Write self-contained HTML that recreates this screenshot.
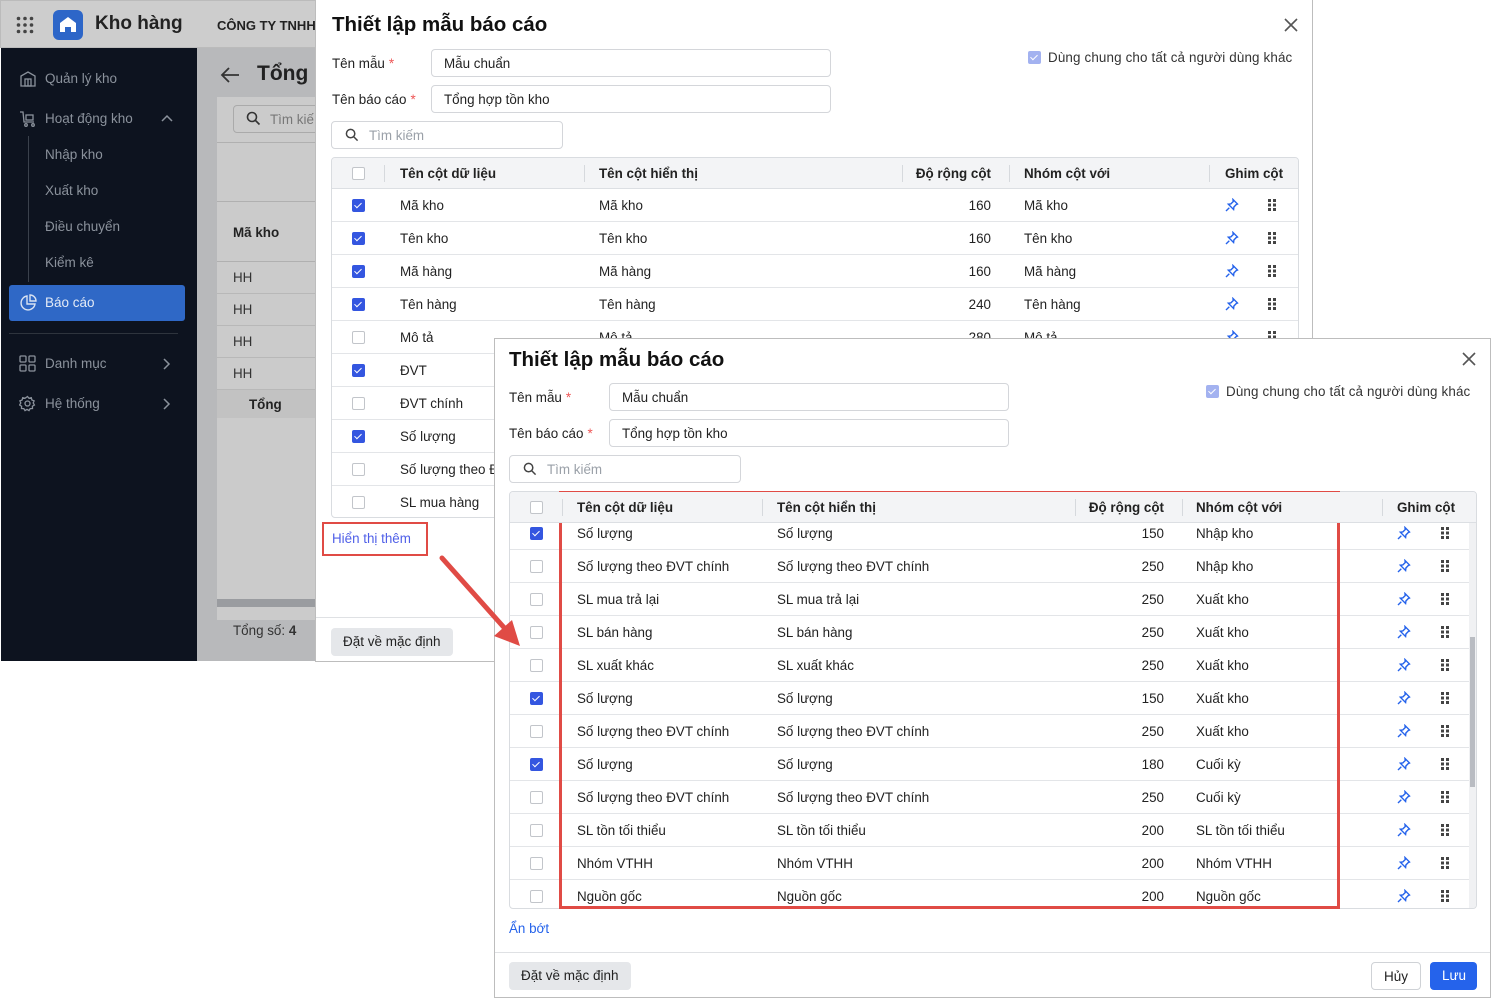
<!DOCTYPE html>
<html><head><meta charset="utf-8">
<style>
*{box-sizing:border-box;margin:0;padding:0}
body{width:1495px;height:1003px;background:#fff;font-family:"Liberation Sans",sans-serif;font-size:13.4px;color:#222;position:relative;overflow:hidden}
.a{position:absolute}
.hdr{left:0;top:0;width:1312px;height:48px;background:#cdcdcd;border:1px solid #bbb}
.side{left:1px;top:48px;width:196px;height:613px;background:#0d131f}
.main{left:197px;top:48px;width:1115px;height:613px;background:#b8b9bb}
.side .it{position:absolute;left:44px;color:#8b929c;font-size:13.5px}
.dlg{background:#fff;border:1px solid #bdbdbd}
.ttl{font-size:20.5px;font-weight:bold;color:#111}
.lbl{font-size:13.4px;color:#222}
.lbl i{color:#e55;font-style:normal;margin-left:4px}
.inp{border:1px solid #d4d6da;border-radius:4px;height:28px;padding:6px 12px;font-size:13.4px;color:#222;background:#fff}
.srch{color:#9aa0a8}
.tbl{border:1px solid #d9dce0;border-radius:4px;overflow:hidden;background:#fff}
.th{position:absolute;left:0;top:0;right:0;height:31px;background:#f3f4f6;border-bottom:1px solid #dcdfe3;font-weight:bold;font-size:13.4px;color:#222}
.th span,.tr span{position:absolute;top:8px;white-space:nowrap}
.tr{position:absolute;left:0;right:0;height:33px;border-bottom:1px solid #e3e5e8}
.tr span{top:9px}
.sep{position:absolute;top:7px;width:1px;height:17px;background:#d6d9dd}
.cb{position:absolute;width:13px;height:13px;border:1px solid #c2c5ca;border-radius:2px;background:#fff}
.cb.on{background:#3456e0;border-color:#3456e0}
.cb.on:after{content:"";position:absolute;left:3px;top:1px;width:3px;height:6px;border:solid #fff;border-width:0 1.5px 1.5px 0;transform:rotate(45deg)}
.btn{border-radius:4px;height:28px;padding:6px 12px;font-size:13.5px;color:#222;background:#e5e7ea}
</style></head><body>

<div class="a hdr"></div>
<div class="a" style="left:16px;top:16px">
<svg width="18" height="18" viewBox="0 0 18 18" fill="#444"><circle cx="2.5" cy="2.5" r="1.8"/><circle cx="9" cy="2.5" r="1.8"/><circle cx="15.5" cy="2.5" r="1.8"/><circle cx="2.5" cy="9" r="1.8"/><circle cx="9" cy="9" r="1.8"/><circle cx="15.5" cy="9" r="1.8"/><circle cx="2.5" cy="15.5" r="1.8"/><circle cx="9" cy="15.5" r="1.8"/><circle cx="15.5" cy="15.5" r="1.8"/></svg></div>
<div class="a" style="left:53px;top:10px;width:30px;height:30px;background:#2d66c8;border-radius:6px">
<svg width="30" height="30" viewBox="0 0 30 30"><path d="M7 22V13l8-6 8 6v9h-5v-5h-6v5z" fill="#fff"/><path d="M13 22v-4h4v4" fill="#2d66c8"/></svg></div>
<div class="a" style="left:95px;top:13px;font-size:19px;font-weight:bold;color:#222">Kho hàng</div>
<div class="a" style="left:217px;top:18px;font-size:13px;font-weight:bold;color:#222;width:98px;overflow:hidden;white-space:nowrap">CÔNG TY TNHH</div>
<div class="a side">
 <svg class="a" style="left:18px;top:22px" width="18" height="18" viewBox="0 0 18 18" fill="none" stroke="#8b929c" stroke-width="1.3"><path d="M2 16V6l7-4 7 4v10z"/><rect x="6" y="9" width="6" height="7"/><path d="M9 9v7"/></svg>
 <div class="it" style="top:23px">Quản lý kho</div>
 <svg class="a" style="left:18px;top:62px" width="18" height="18" viewBox="0 0 18 18" fill="none" stroke="#8b929c" stroke-width="1.3"><path d="M1 2h3l1 10h10"/><rect x="7" y="5" width="7" height="5"/><circle cx="7" cy="15" r="1.3"/><circle cx="14" cy="15" r="1.3"/></svg>
 <div class="it" style="top:63px">Hoạt động kho</div>
 <svg class="a" style="left:160px;top:66px" width="12" height="8" viewBox="0 0 12 8" fill="none" stroke="#8b929c" stroke-width="1.5"><path d="M1 7l5-5 5 5"/></svg>
 <div class="a" style="left:27px;top:88px;width:1px;height:146px;background:#3a414c"></div>
 <div class="it" style="top:99px">Nhập kho</div>
 <div class="it" style="top:135px">Xuất kho</div>
 <div class="it" style="top:171px">Điều chuyển</div>
 <div class="it" style="top:207px">Kiểm kê</div>
 <div class="a" style="left:8px;top:237px;width:176px;height:36px;background:#2f68c6;border-radius:3px"></div>
 <svg class="a" style="left:18px;top:246px" width="18" height="18" viewBox="0 0 18 18" fill="none" stroke="#d8e2f2" stroke-width="1.4"><path d="M8 2a7 7 0 1 0 8 8H8z"/><path d="M11 1v6h6a6 6 0 0 0-6-6z"/></svg>
 <div class="it" style="top:247px;color:#e4ebf6">Báo cáo</div>
 <div class="a" style="left:8px;top:285px;width:169px;height:1px;background:#2e343d"></div>
 <svg class="a" style="left:18px;top:307px" width="17" height="17" viewBox="0 0 17 17" fill="none" stroke="#8b929c" stroke-width="1.3"><rect x="1" y="1" width="6" height="6" rx="1"/><rect x="10" y="1" width="6" height="6" rx="1"/><rect x="1" y="10" width="6" height="6" rx="1"/><rect x="10" y="10" width="6" height="6" rx="1"/></svg>
 <div class="it" style="top:308px">Danh mục</div>
 <svg class="a" style="left:162px;top:310px" width="8" height="12" viewBox="0 0 8 12" fill="none" stroke="#8b929c" stroke-width="1.5"><path d="M1 1l5 5-5 5"/></svg>
 <svg class="a" style="left:18px;top:347px" width="17" height="17" viewBox="0 0 17 17" fill="none" stroke="#8b929c" stroke-width="1.3"><circle cx="8.5" cy="8.5" r="2.5"/><path d="M8.5 1.5l1.5 1.8 2.3-.6.6 2.3 2.2.9-.9 2.1 1.2 2-2 1.2.1 2.3-2.3.1-1.2 2-2-1.2-2 1.2-1.2-2-2.3-.1.1-2.3-2-1.2 1.2-2-.9-2.1 2.2-.9.6-2.3 2.3.6z"/></svg>
 <div class="it" style="top:348px">Hệ thống</div>
 <svg class="a" style="left:162px;top:350px" width="8" height="12" viewBox="0 0 8 12" fill="none" stroke="#8b929c" stroke-width="1.5"><path d="M1 1l5 5-5 5"/></svg>
</div>
<div class="a main"></div>
<svg class="a" style="left:220px;top:66px" width="20" height="18" viewBox="0 0 20 18" fill="none" stroke="#333" stroke-width="1.8"><path d="M19 9H2M9 2L2 9l7 7"/></svg>
<div class="a" style="left:257px;top:62px;font-size:21px;font-weight:bold;color:#222">Tổng h</div>
<div class="a" style="left:217px;top:97px;width:98px;height:523px;background:#cbcbcb"></div>
<div class="a" style="left:233px;top:105px;width:90px;height:28px;border:1px solid #aaa;border-radius:4px;background:#cbcbcb"></div>
<svg class="a" style="left:246px;top:111px" width="15" height="15" viewBox="0 0 15 15" fill="none" stroke="#333" stroke-width="1.6"><circle cx="6" cy="6" r="4.5"/><path d="M9.5 9.5l4 4"/></svg>
<div class="a" style="left:270px;top:112px;color:#777">Tìm kiế</div>
<div class="a" style="left:217px;top:142px;width:98px;height:1px;background:#b0b0b0"></div>
<div class="a" style="left:217px;top:201px;width:98px;height:61px;border-top:1px solid #b0b0b0;border-bottom:1px solid #b0b0b0"></div>
<div class="a" style="left:233px;top:225px;font-weight:bold;color:#222">Mã kho</div>
<div class="a" style="left:217px;top:293px;width:98px;height:1px;background:#b8b8b8"></div>
<div class="a" style="left:217px;top:325px;width:98px;height:1px;background:#b8b8b8"></div>
<div class="a" style="left:217px;top:357px;width:98px;height:1px;background:#b8b8b8"></div>
<div class="a" style="left:217px;top:389px;width:98px;height:29px;background:#c2c2c2;border-top:1px solid #b8b8b8"></div>
<div class="a" style="left:233px;top:270px;color:#333">HH</div>
<div class="a" style="left:233px;top:302px;color:#333">HH</div>
<div class="a" style="left:233px;top:334px;color:#333">HH</div>
<div class="a" style="left:233px;top:366px;color:#333">HH</div>
<div class="a" style="left:249px;top:397px;font-weight:bold;color:#222">Tổng</div>
<div class="a" style="left:217px;top:599px;width:98px;height:8px;background:#9a9ca0"></div>
<div class="a" style="left:233px;top:623px;color:#333">Tổng số: <b>4</b></div>

<div class="a dlg" style="left:315px;top:0;width:998px;height:662px;border-top:none">
 <div class="a ttl" style="left:16px;top:13px">Thiết lập mẫu báo cáo</div>
 <svg class="a" style="left:968px;top:18px" width="14" height="14" viewBox="0 0 14 14" stroke="#555" stroke-width="1.6"><path d="M1 1l12 12M13 1L1 13"/></svg>
 <div class="a cb on" style="left:712px;top:51px;opacity:.45"></div>
 <div class="a" style="left:732px;top:50px;color:#333;letter-spacing:.15px">Dùng chung cho tất cả người dùng khác</div>
 <div class="a lbl" style="left:16px;top:56px">Tên mẫu<i>*</i></div>
 <div class="a inp" style="left:115px;top:49px;width:400px">Mẫu chuẩn</div>
 <div class="a lbl" style="left:16px;top:92px">Tên báo cáo<i>*</i></div>
 <div class="a inp" style="left:115px;top:85px;width:400px">Tổng hợp tồn kho</div>
 <div class="a inp srch" style="left:15px;top:121px;width:232px;padding-left:37px">Tìm kiếm</div>
 <svg class="a" style="left:29px;top:128px" width="14" height="14" viewBox="0 0 15 15" fill="none" stroke="#444" stroke-width="1.6"><circle cx="6" cy="6" r="4.5"/><path d="M9.5 9.5l4 4"/></svg>
 <div class="a tbl" style="left:15px;top:157px;width:968px;height:361px" id="t1"></div>
 <div class="a" style="left:6px;top:522px;width:106px;height:34px;border:2px solid #e04b45"></div>
 <div class="a" style="left:16px;top:531px;color:#4f5fe8">Hiển thị thêm</div>
 <div class="a" style="left:0;top:617px;width:996px;height:1px;background:#dfe1e4"></div>
 <div class="a btn" style="left:15px;top:628px">Đặt về mặc định</div>
</div>

<div class="a dlg" style="left:494px;top:338px;width:997px;height:660px">
 <div class="a ttl" style="left:14px;top:9px">Thiết lập mẫu báo cáo</div>
 <svg class="a" style="left:967px;top:13px" width="14" height="14" viewBox="0 0 14 14" stroke="#555" stroke-width="1.6"><path d="M1 1l12 12M13 1L1 13"/></svg>
 <div class="a cb on" style="left:711px;top:46px;opacity:.45"></div>
 <div class="a" style="left:731px;top:45px;color:#333;letter-spacing:.15px">Dùng chung cho tất cả người dùng khác</div>
 <div class="a lbl" style="left:14px;top:51px">Tên mẫu<i>*</i></div>
 <div class="a inp" style="left:114px;top:44px;width:400px">Mẫu chuẩn</div>
 <div class="a lbl" style="left:14px;top:87px">Tên báo cáo<i>*</i></div>
 <div class="a inp" style="left:114px;top:80px;width:400px">Tổng hợp tồn kho</div>
 <div class="a inp srch" style="left:14px;top:116px;width:232px;padding-left:37px">Tìm kiếm</div>
 <svg class="a" style="left:28px;top:123px" width="14" height="14" viewBox="0 0 15 15" fill="none" stroke="#444" stroke-width="1.6"><circle cx="6" cy="6" r="4.5"/><path d="M9.5 9.5l4 4"/></svg>
 <div class="a tbl" style="left:14px;top:152px;width:968px;height:418px" id="t2"></div>
 <div class="a" style="left:64px;top:152px;width:781px;height:418px;border:3px solid #e04b45"></div>
 <div class="a" style="left:14px;top:582px;color:#2563eb">Ẩn bớt</div>
 <div class="a" style="left:0;top:613px;width:995px;height:1px;background:#dfe1e4"></div>
 <div class="a btn" style="left:14px;top:623px">Đặt về mặc định</div>
 <div class="a btn" style="left:876px;top:623px;background:#fff;border:1px solid #cfd2d6">Hủy</div>
 <div class="a btn" style="left:935px;top:623px;background:#2563eb;color:#fff;width:47px">Lưu</div>
</div>

<svg class="a" style="left:430px;top:550px" width="100" height="105" viewBox="0 0 100 105"><path d="M12 8L78 82" stroke="#e04b45" stroke-width="5" stroke-linecap="round"/><path d="M90 96L64 86L82 70z" fill="#e04b45"/></svg>

<script>
var pin='<svg width="14" height="14" viewBox="0 0 14 14" fill="none" stroke="#2563eb" stroke-width="1.4"><path d="M8 1.5l4.5 4.5-1.3.6-2.3 2.4-.3 2.5-5.3-5.3 2.5-.3 2.4-2.3z"/><path d="M4.3 9.7L1 13"/></svg>';
var drag='<svg width="8" height="12" viewBox="0 0 8 12" fill="#444"><rect x="0" y="0" width="3" height="3"/><rect x="5" y="0" width="3" height="3"/><rect x="0" y="4.5" width="3" height="3"/><rect x="5" y="4.5" width="3" height="3"/><rect x="0" y="9" width="3" height="3"/><rect x="5" y="9" width="3" height="3"/></svg>';
function build(id,o,rows,start,seps){
 var h='<div class="th"><div class="cb" style="left:'+(o.cb-7)+'px;top:9px"></div>';
 seps.forEach(function(s){h+='<div class="sep" style="left:'+s+'px"></div>'});
 h+='<span style="left:'+o.c1+'px">Tên cột dữ liệu</span><span style="left:'+o.c2+'px">Tên cột hiển thị</span><span style="left:'+(o.w-120)+'px;width:120px;text-align:right">Độ rộng cột</span><span style="left:'+o.g+'px">Nhóm cột với</span><span style="left:'+(o.p-7)+'px">Ghim cột</span></div>';
 rows.forEach(function(r,i){
  var t=start+i*33;
  h+='<div class="tr" style="top:'+t+'px"><div class="cb'+(r[0]?' on':'')+'" style="left:'+(o.cb-7)+'px;top:10px"></div><span style="left:'+o.c1+'px">'+r[1]+'</span><span style="left:'+o.c2+'px">'+r[1]+'</span><span style="left:'+(o.w-60)+'px;width:60px;text-align:right">'+r[2]+'</span><span style="left:'+o.g+'px">'+r[3]+'</span><span style="left:'+(o.p-7)+'px;top:9px">'+pin+'</span><span style="left:'+(o.d-4)+'px;top:10px">'+drag+'</span></div>';
 });
 document.getElementById(id).innerHTML=h;
}
build('t1',{cb:27,c1:68,c2:267,w:659,g:692,p:900,d:940},[
[1,'Mã kho',160,'Mã kho'],[1,'Tên kho',160,'Tên kho'],[1,'Mã hàng',160,'Mã hàng'],[1,'Tên hàng',240,'Tên hàng'],[0,'Mô tả',280,'Mô tả'],[1,'ĐVT',160,'ĐVT'],[0,'ĐVT chính',160,'ĐVT chính'],[1,'Số lượng',150,'Số lượng'],[0,'Số lượng theo ĐVT chính',250,'Số lượng'],[0,'SL mua hàng',250,'SL mua hàng']
],31,[52,252,570,677,877]);
build('t2',{cb:27,c1:67,c2:267,w:654,g:686,p:894,d:935},[
[1,'Số lượng',150,'Nhập kho'],[0,'Số lượng theo ĐVT chính',250,'Nhập kho'],[0,'SL mua trả lại',250,'Xuất kho'],[0,'SL bán hàng',250,'Xuất kho'],[0,'SL xuất khác',250,'Xuất kho'],[1,'Số lượng',150,'Xuất kho'],[0,'Số lượng theo ĐVT chính',250,'Xuất kho'],[1,'Số lượng',180,'Cuối kỳ'],[0,'Số lượng theo ĐVT chính',250,'Cuối kỳ'],[0,'SL tồn tối thiểu',200,'SL tồn tối thiểu'],[0,'Nhóm VTHH',200,'Nhóm VTHH'],[0,'Nguồn gốc',200,'Nguồn gốc']
],25,[52,252,565,672,872]);
var t2=document.getElementById('t2');
t2.querySelector('.th').style.zIndex=2;
t2.insertAdjacentHTML('beforeend','<div style="position:absolute;right:0;top:31px;width:7px;bottom:0;background:#f0f1f3;z-index:3"></div><div style="position:absolute;right:1px;top:145px;width:5px;height:150px;background:#b9bcc2;z-index:4"></div>');
</script>
</body></html>
